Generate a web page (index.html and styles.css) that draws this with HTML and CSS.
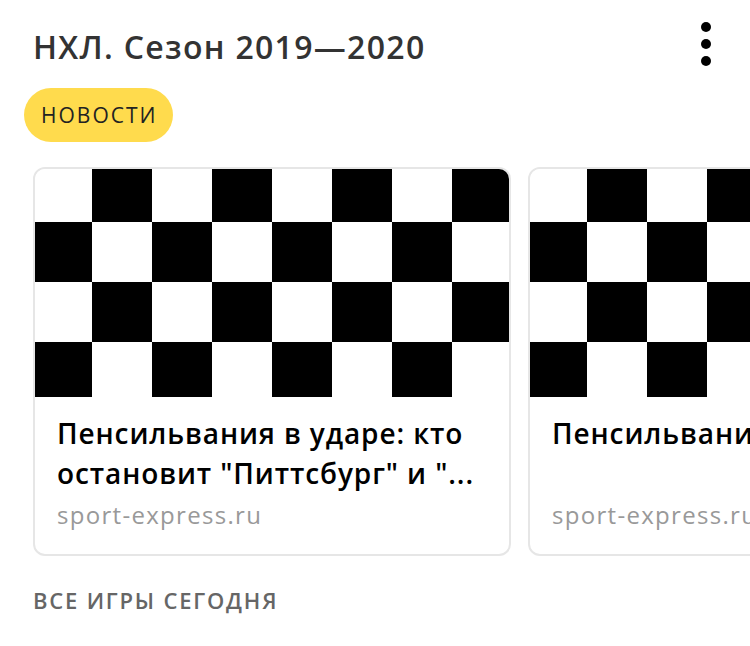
FILE: index.html
```html
<!DOCTYPE html>
<html lang="ru">
<head>
<meta charset="utf-8">
<link rel="stylesheet" href="styles.css">
</head>
<body>
<div class="page">
  <header class="header">
    <h1 class="title">НХЛ. Сезон 2019—2020</h1>
    <div class="more" aria-label="Ещё">
      <span class="dot"></span><span class="dot"></span><span class="dot"></span>
    </div>
  </header>
  <div class="tabs">
    <span class="badge">НОВОСТИ</span>
  </div>
  <div class="carousel">
    <article class="card">
      <div class="card-image"></div>
      <div class="card-body">
        <div class="card-title">Пенсильвания в ударе: кто остановит "Питтсбург" и "...</div>
        <div class="card-source">sport-express.ru</div>
      </div>
    </article>
    <article class="card">
      <div class="card-image"></div>
      <div class="card-body">
        <div class="card-title">Пенсильвания в ударе: кто остановит "Питтсбург" и "...</div>
        <div class="card-source">sport-express.ru</div>
      </div>
    </article>
  </div>
  <div class="all-games">ВСЕ ИГРЫ СЕГОДНЯ</div>
</div>
</body>
</html>
```
FILE: styles.css
```css
html, body {
  margin: 0;
  padding: 0;
  background: #fff;
}
body {
  font-family: "Open Sans", "Noto Sans", sans-serif;
  width: 750px;
  height: 646px;
  overflow: hidden;
}
.page {
  display: flex;
  flex-direction: column;
}
.header {
  display: flex;
  align-items: center;
  justify-content: space-between;
  padding: 24px 39px 0 33px;
  height: 46px;
}
.title {
  margin: 0;
  font-size: 32px;
  font-weight: 600;
  color: #333;
  line-height: 46px;
  letter-spacing: 1.3px;
}
.more {
  display: flex;
  flex-direction: column;
  gap: 7px;
  align-items: center;
  margin-top: -6px;
}
.dot {
  width: 10px;
  height: 10px;
  border-radius: 50%;
  background: #000;
}
.tabs {
  display: flex;
  padding: 18px 0 0 24px;
}
.badge {
  display: flex;
  align-items: center;
  height: 54px;
  padding: 0 16px 0 17px;
  border-radius: 27px;
  background: #ffdb4d;
  color: #222;
  font-size: 21px;
  font-weight: 500;
  letter-spacing: 2px;
}
.carousel {
  display: flex;
  gap: 17px;
  padding: 25px 0 0 33px;
  overflow: hidden;
}
.card {
  flex: 0 0 auto;
  width: 474px;
  height: 385px;
  border: 2px solid #e6e6e6;
  border-radius: 12px;
  overflow: hidden;
  display: flex;
  flex-direction: column;
}
.card-image {
  height: 228px;
  background-image: repeating-conic-gradient(#000 0 25%, #fff 0 50%);
  background-size: 120px 120px;
  background-position: -3px -7px;
}
.card-body {
  padding: 16px 22px 0 22px;
}
.card-title {
  font-size: 28px;
  font-weight: 600;
  line-height: 40px;
  color: #000;
  height: 80px;
  overflow: hidden;
  letter-spacing: 0.9px;
}
.card:nth-child(2) .card-title {
  white-space: nowrap;
}
.card-source {
  margin-top: 7px;
  font-size: 24px;
  line-height: 30px;
  color: #999;
  letter-spacing: 1.3px;
  white-space: nowrap;
}
.all-games {
  padding: 29px 0 0 33px;
  font-size: 22px;
  font-weight: 600;
  color: #666;
  letter-spacing: 1.8px;
}
```
